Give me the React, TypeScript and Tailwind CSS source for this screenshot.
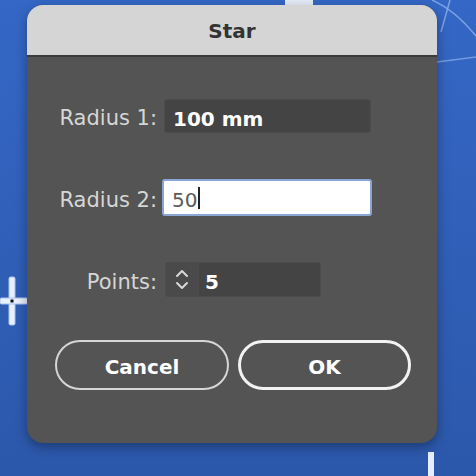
import React from "react";

const font = { fontFamily: '"DejaVu Sans", "Liberation Sans", sans-serif' };

function Label({ children }: { children: React.ReactNode }) {
  return (
    <div className="w-[131px] shrink-0 pr-[1px] pt-[5px] text-right text-[21px] text-[#d6d6d6] leading-none">
      {children}
    </div>
  );
}

export default function App() {
  return (
    <div
      className="relative h-[476px] w-[476px] overflow-hidden bg-gradient-to-b from-[#3467c6] to-[#2c58ab]"
      style={font}
    >
      {/* canvas decorations */}
      <div className="absolute left-[285px] top-0 h-[5px] w-[28px] bg-[#e4ecf8]" />
      <svg className="absolute left-0 top-0" width="476" height="476" viewBox="0 0 476 476">
        <path d="M450 0 L441 32" stroke="#8fb0ea" strokeWidth="1.5" fill="none" opacity="0.8" />
        <path d="M432 0 Q455 10 476 36" stroke="#8fb0ea" strokeWidth="1.5" fill="none" opacity="0.8" />
        <path d="M437 62 L476 57" stroke="#8fb0ea" strokeWidth="1.5" fill="none" opacity="0.7" />
        {/* crosshair */}
        <rect x="9" y="277" width="6" height="48" rx="1.5" fill="#e8f0fc" stroke="#a8c2ee" strokeWidth="1" />
        <rect x="0" y="298" width="28" height="6" rx="1.5" fill="#e8f0fc" stroke="#a8c2ee" strokeWidth="1" />
        <rect x="10.5" y="299.5" width="3" height="3" fill="#111" />
        {/* bottom right bar */}
        <rect x="428" y="452" width="6" height="24" fill="#e6eefb" />
      </svg>

      {/* dialog */}
      <div className="relative ml-[27px] mt-[5px] flex h-[438px] w-[410px] flex-col overflow-hidden rounded-[16px] bg-[#545454] shadow-[0_4px_12px_rgba(0,0,0,0.35)]">
        <div className="flex h-[52px] shrink-0 items-center justify-center border-b-2 border-[#3b3b3b] bg-[#d5d5d5]">
          <span className="pt-[2px] text-[20px] font-bold text-[#333333] leading-none">Star</span>
        </div>

        <div className="flex flex-col pt-[42px]">
          {/* Radius 1 */}
          <div className="flex h-[34px] items-center">
            <Label>Radius 1:</Label>
            <div className="ml-[6px] flex h-[34px] w-[207px] items-center rounded-[3px] border border-[#4c4c4c] bg-[#444444] pl-[8px]">
              <span className="pt-[5px] text-[20px] font-bold text-white leading-none">100 mm</span>
            </div>
          </div>

          {/* Radius 2 */}
          <div className="mt-[46px] flex h-[37px] items-center">
            <Label>Radius 2:</Label>
            <div className="ml-[4px] flex h-[37px] w-[210px] items-center rounded-[3px] border-2 border-[#8aa6d6] bg-white pl-[8px]">
              <span className="pt-[4px] text-[20px] text-[#5a5a5a] leading-none">50</span>
              <span className="ml-[1px] h-[22px] w-[2px] bg-[#222]" />
            </div>
          </div>

          {/* Points */}
          <div className="mt-[46px] flex h-[35px] items-center">
            <Label>Points:</Label>
            <div className="ml-[7px] flex h-[35px] items-stretch">
              <div className="flex w-[34px] flex-col items-center justify-center gap-[3px] rounded-l-[3px] border border-[#4c4c4c] bg-[#4a4a4a]">
                <svg width="14" height="9" viewBox="0 0 14 9">
                  <path d="M2 7 L7 2 L12 7" stroke="#d8d8d8" strokeWidth="2" fill="none" strokeLinecap="round" strokeLinejoin="round" />
                </svg>
                <svg width="14" height="9" viewBox="0 0 14 9">
                  <path d="M2 2 L7 7 L12 2" stroke="#d8d8d8" strokeWidth="2" fill="none" strokeLinecap="round" strokeLinejoin="round" />
                </svg>
              </div>
              <div className="flex w-[122px] items-center rounded-r-[3px] border border-l-0 border-[#4c4c4c] bg-[#444444] pl-[6px]">
                <span className="pt-[5px] text-[20px] font-bold text-white leading-none">5</span>
              </div>
            </div>
          </div>

          {/* Buttons */}
          <div className="mt-[43px] flex h-[50px] items-center gap-[9px] pl-[28px]">
            <button className="flex h-[50px] w-[174px] items-center justify-center rounded-full border-2 border-[#d6d6d6] bg-[#545454] pt-[4px] text-[20px] font-bold text-white leading-none">
              Cancel
            </button>
            <button className="flex h-[50px] w-[173px] items-center justify-center rounded-full border-[3px] border-[#f2f2f2] bg-[#545454] pt-[4px] text-[20px] font-bold text-white leading-none">
              OK
            </button>
          </div>
        </div>
      </div>
    </div>
  );
}
